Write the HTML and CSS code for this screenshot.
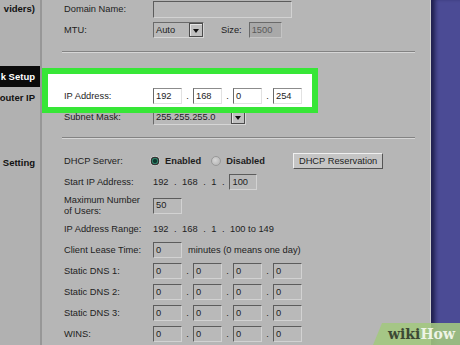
FILE: index.html
```html
<!DOCTYPE html>
<html>
<head>
<meta charset="utf-8">
<link rel="stylesheet" href="styles.css">
</head>
<body>
<div class="screen">
  <aside class="side">
    <div class="side-item s1"><span>viders)</span></div>
    <div class="side-item active"><span>k Setup</span></div>
    <div class="side-item s3"><span>outer IP</span></div>
    <div class="side-item s4"><span>Setting</span></div>
  </aside>

  <main class="panel">
    <div class="row r-domain">
      <span class="label">Domain Name:</span>
      <span class="field domain"></span>
    </div>
    <div class="row r-mtu">
      <span class="label">MTU:</span>
      <span class="select mtu"><span class="sel-text">Auto</span><span class="dd"></span></span>
      <span class="size-label">Size:</span>
      <span class="field size">1500</span>
    </div>
    <hr class="sep sep1">

    <div class="row r-ip">
      <span class="label">IP Address:</span>
      <span class="ipgroup">
        <span class="field">192</span><span class="dot">.</span>
        <span class="field">168</span><span class="dot">.</span>
        <span class="field">0</span><span class="dot">.</span>
        <span class="field">254</span>
      </span>
    </div>
    <div class="row r-subnet">
      <span class="label">Subnet Mask:</span>
      <span class="select subnet"><span class="sel-text">255.255.255.0</span><span class="dd"></span></span>
    </div>
    <hr class="sep sep2">

    <div class="row r-dhcp">
      <span class="label">DHCP Server:</span>
      <span class="radio on"></span><span class="opt">Enabled</span>
      <span class="radio off"></span><span class="opt">Disabled</span>
      <button class="btn">DHCP Reservation</button>
    </div>
    <div class="row">
      <span class="label">Start IP Address:</span>
      <span class="iptext"><span>192</span><span>.</span><span>168</span><span>.</span><span>1</span><span>.</span></span>
      <span class="field start">100</span>
    </div>
    <div class="row r-max">
      <span class="label">Maximum Number<br>of Users:</span>
      <span class="field">50</span>
    </div>
    <div class="row">
      <span class="label">IP Address Range:</span>
      <span class="iptext"><span>192</span><span>.</span><span>168</span><span>.</span><span>1</span><span>.</span><span>100 to 149</span></span>
    </div>
    <div class="row">
      <span class="label">Client Lease Time:</span>
      <span class="field">0</span>
      <span class="hint">minutes (0 means one day)</span>
    </div>
    <div class="row">
      <span class="label">Static DNS 1:</span>
      <span class="ipgroup"><span class="field">0</span><span class="dot">.</span><span class="field">0</span><span class="dot">.</span><span class="field">0</span><span class="dot">.</span><span class="field">0</span></span>
    </div>
    <div class="row">
      <span class="label">Static DNS 2:</span>
      <span class="ipgroup"><span class="field">0</span><span class="dot">.</span><span class="field">0</span><span class="dot">.</span><span class="field">0</span><span class="dot">.</span><span class="field">0</span></span>
    </div>
    <div class="row">
      <span class="label">Static DNS 3:</span>
      <span class="ipgroup"><span class="field">0</span><span class="dot">.</span><span class="field">0</span><span class="dot">.</span><span class="field">0</span><span class="dot">.</span><span class="field">0</span></span>
    </div>
    <div class="row">
      <span class="label">WINS:</span>
      <span class="ipgroup"><span class="field">0</span><span class="dot">.</span><span class="field">0</span><span class="dot">.</span><span class="field">0</span><span class="dot">.</span><span class="field">0</span></span>
    </div>
  </main>

  <div class="edge"></div>

  <div class="wh-logo"><span class="wiki">wiki</span><span class="how">How</span></div>
</div>
</body>
</html>
```

FILE: styles.css
```css
html, body {
  margin: 0;
  padding: 0;
  height: 100%;
  overflow: hidden;
}

body {
  font-family: "Liberation Sans", Arial, sans-serif;
  font-size: 9.3px;
  line-height: 11px;
  color: #1d1d1d;
  background: #b5b5b5;
}

.screen {
  position: relative;
  display: flex;
  height: 345px;
  overflow: hidden;
}

/* ---------- sidebar ---------- */
.side {
  width: 40px;
  flex: none;
  background: #b1b1b1;
  border-right: 2px solid #979797;
  font-weight: bold;
  font-size: 9.5px;
  color: #121212;
}

.side-item {
  display: flex;
  justify-content: flex-end;
  align-items: center;
  white-space: nowrap;
  padding-right: 5px;
  height: 20px;
}

.s1 { height: 17px; }

.active {
  margin-top: 49px;
  height: 21px;
  background: #0b0b0b;
  color: #ffffff;
}

.s3 { height: 20px; }

.s4 {
  margin-top: 45px;
  height: 20px;
}

/* ---------- main panel ---------- */
.panel {
  flex: 1;
  background: #b6b6b6;
  padding: 0 15px 0 22px;
  border-right: 1px solid #cdcdcd;
}

.edge {
  width: 29px;
  flex: none;
  background: #4b4b95;
  box-shadow: inset 6px 0 4px -2px rgba(8, 8, 40, 0.65);
}

.row {
  display: flex;
  align-items: center;
  height: 21px;
  white-space: nowrap;
}

.label {
  width: 89px;
  flex: none;
}

.r-domain { height: 19px; }
.r-mtu { height: 22px; }

.sep {
  height: 0;
  margin: 10px 0 0 -2px;
  padding: 0;
  border: 0;
  border-top: 1px solid #838383;
  border-bottom: 1px solid #d6d6d6;
}

.r-ip {
  position: relative;
  z-index: 1;
  height: 22px;
  margin-top: 32px;
}

.r-ip::before {
  content: "";
  position: absolute;
  left: -22px;
  top: -17px;
  width: 276px;
  height: 45px;
  box-sizing: border-box;
  border: 6px solid #37e637;
  background: #ffffff;
  z-index: -1;
}

.r-subnet { height: 20px; }

.sep2 { margin-top: 10px; }

.r-dhcp { margin-top: 11.5px; }

.r-max { height: 26px; }

/* ---------- fields ---------- */
.field {
  box-sizing: border-box;
  width: 29px;
  height: 16px;
  flex: none;
  display: flex;
  align-items: center;
  padding-left: 2px;
  border: 1px solid;
  border-color: #5c5c5c #d2d2d2 #d2d2d2 #5c5c5c;
  background: #b9b9b9;
}

.field.domain {
  width: 139px;
  height: 17px;
}

.r-ip .field {
  background: #ffffff;
  border-color: #8c8c8c #e2e2e2 #e2e2e2 #6a6a6a;
}

.field.size {
  width: 33px;
  margin-left: 7px;
  background: #a9a9a9;
  color: #5a5a5a;
  border-color: #6a6a6a #c4c4c4 #c4c4c4 #6a6a6a;
}

.field.start {
  width: 28px;
  margin-left: 5px;
}

.size-label { margin-left: 17px; }

.ipgroup {
  display: flex;
  align-items: center;
}

.dot {
  width: 11px;
  text-align: center;
}

.iptext {
  display: flex;
  align-items: center;
  gap: 5.5px;
}

.hint { margin-left: 6px; }

/* ---------- selects ---------- */
.select {
  box-sizing: border-box;
  display: flex;
  align-items: center;
  height: 16px;
  border: 1px solid;
  border-color: #6a6a6a #d6d6d6 #d6d6d6 #6a6a6a;
  background: #b9b9b9;
}

.select.mtu { width: 51px; }
.select.subnet { width: 93px; }

.sel-text {
  flex: 1;
  padding-left: 2px;
}

.dd {
  box-sizing: border-box;
  width: 14px;
  height: 14px;
  display: flex;
  align-items: center;
  justify-content: center;
  border: 1px solid #4c4c4c;
  box-shadow: inset 1px 1px #e6e6e6;
  background: #c0c0c0;
}

.dd::after {
  content: "";
  border-left: 3.5px solid transparent;
  border-right: 3.5px solid transparent;
  border-top: 4px solid #111111;
  margin-top: 1px;
}

/* ---------- radios & button ---------- */
.radio {
  width: 10px;
  height: 10px;
  flex: none;
  border-radius: 50%;
  box-sizing: border-box;
}

.radio.on {
  margin-left: -3px;
  background: radial-gradient(circle, #0e3a30 0 1.8px, #2f8068 2.4px 2.9px, #333333 3.4px 4.2px, #d0d0d0 4.6px);
}

.radio.off {
  margin-left: 10px;
  border: 1px solid #999999;
  background: radial-gradient(circle at 40% 40%, #d6d6d6, #b0b0b0);
}

.opt {
  font-weight: bold;
  margin-left: 5px;
}

.btn {
  margin-left: 28px;
  box-sizing: border-box;
  height: 16px;
  padding: 0 5px;
  display: flex;
  align-items: center;
  font-family: "Liberation Sans", Arial, sans-serif;
  font-size: 9.3px;
  color: #1d1d1d;
  background: #c5c5c5;
  border: 1px solid;
  border-color: #f0f0f0 #555555 #555555 #f0f0f0;
  border-radius: 0;
}

/* ---------- wikiHow watermark ---------- */
.wh-logo {
  position: absolute;
  right: 0;
  bottom: 0;
  width: 87px;
  height: 22px;
  box-sizing: border-box;
  padding-right: 5px;
  display: flex;
  align-items: center;
  justify-content: flex-end;
  background: rgba(163, 200, 128, 0.88);
  clip-path: polygon(9px 0, 100% 0, 100% 100%, 0 100%);
  font-family: "DejaVu Serif", "Liberation Serif", serif;
  font-weight: bold;
  font-size: 14px;
}

.wiki { color: #3c4934; }
.how { color: #eef4e6; }
```
